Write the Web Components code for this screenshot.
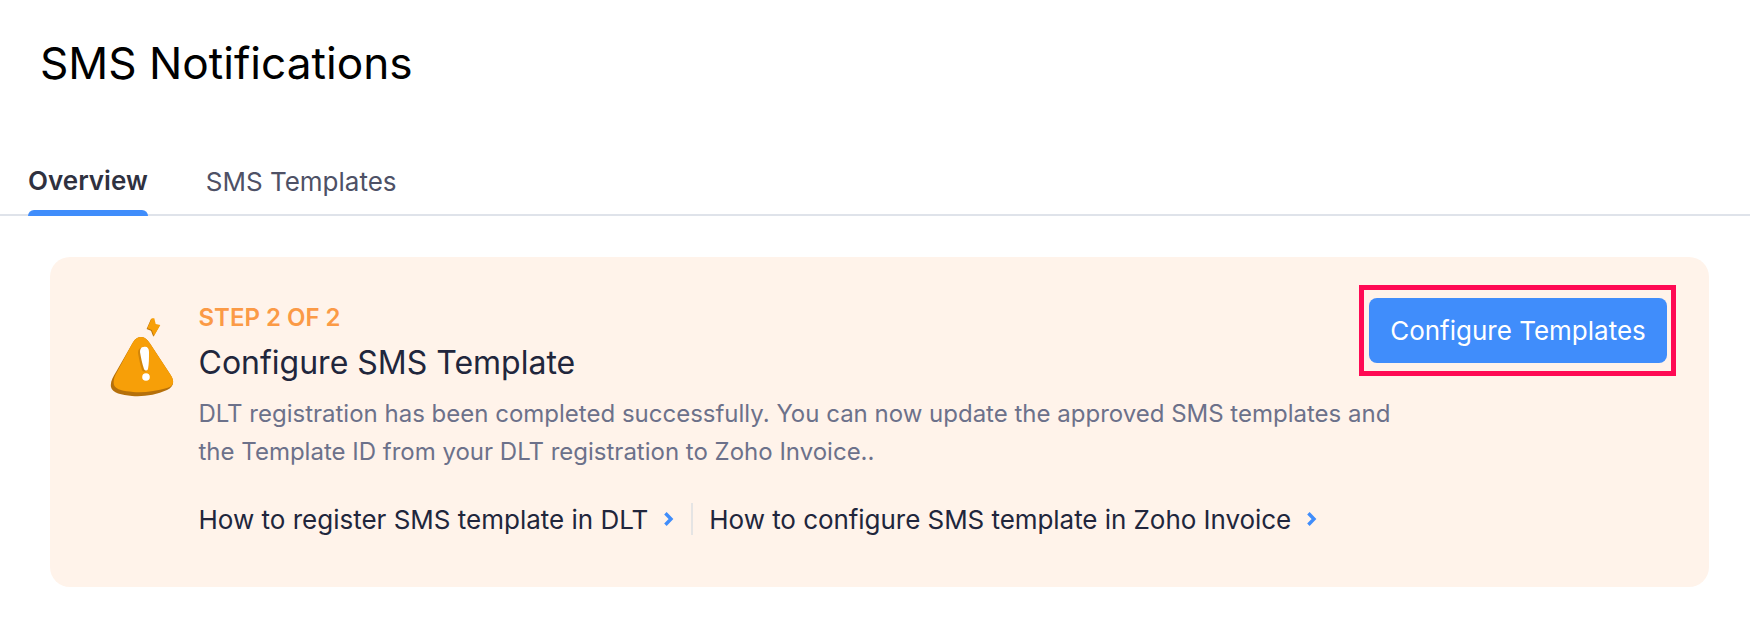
<!DOCTYPE html>
<html>
<head>
<meta charset="utf-8">
<style>
  html, body { margin: 0; background: #fff; }
  body { font-family: Inter, sans-serif; width: 1750px; height: 636px; overflow: hidden; }
</style>
</head>
<body>
<sms-page></sms-page>
<script>
class SmsTabs extends HTMLElement {
  constructor() {
    super();
    this.attachShadow({ mode: 'open' });
    this.shadowRoot.innerHTML = `
      <style>
        :host { display: flex; gap: 58px; padding: 0 0 0 28px; height: 62px; border-bottom: 2px solid #dfe3ea; box-sizing: border-box; font-size: 26px; }
        .tab { position: relative; color: #4e5166; line-height: 56px; height: 62px; box-sizing: border-box; }
        .tab.active { color: #2f3140; font-weight: 600; line-height: 53px; }
        .tab.active::after { content: ''; position: absolute; left: 0; right: 0; bottom: 0; height: 6px; background: #408dfb; border-radius: 6px 6px 0 0; }
      </style>
      <div class="tab active">Overview</div>
      <div class="tab">SMS Templates</div>
    `;
  }
}

class StepCard extends HTMLElement {
  constructor() {
    super();
    this.attachShadow({ mode: 'open' });
    this.shadowRoot.innerHTML = `
      <style>
        :host { display: flex; margin: 41px 41px 0 50px; height: 330px; box-sizing: border-box; background: #fff3ea; border-radius: 20px; padding: 48px 33px 0 60px; }
        .icon { width: 64px; height: 82px; margin: 11px 24.5px 0 0; flex: none; }
        .body { flex: 1; min-width: 0; }
        .step { color: #fb9a46; font-size: 24px; font-weight: 600; line-height: 26px; }
        h2 { margin: 12px 0 0; font-size: 32px; font-weight: 400; color: #21263c; line-height: 40px; }
        p { margin: 12px 0 0; font-size: 24px; color: #6c718a; line-height: 38px; width: 1200px; }
        .links { display: flex; align-items: center; margin-top: 32px; font-size: 26px; color: #21263c; white-space: nowrap; }
        .links svg { width: 11px; height: 16px; margin-left: 15px; flex: none; }
        .links .second { letter-spacing: -0.05px; }
        .sep { width: 2px; height: 32px; background: #e5e4e4; margin: 0 16px 0 17px; }
        .action { flex: none; align-self: flex-start; margin-top: -20px; border: 5px solid #ff0a54; padding: 8px 4px 8px 5px; }
        button { display: block; width: 298px; height: 65px; padding: 0; background: #408dfb; color: #fff; border: 0; border-radius: 8px; font: 400 26px Inter, sans-serif; }
      </style>
      <svg class="icon" viewBox="0 0 64 82">
        <path d="M41 3L43.6 3L45 8.7L49.6 9.7L43.3 20.7L41 14.7L36.6 13z" fill="#b5700b"/>
        <path d="M41.7 2.3L44.3 2.3L45.7 8L50.3 9L44 20L41.7 14L37.3 12.3z" fill="#f79f08"/>
        <path d="M31 21C35 21 38 24 41 29L60 58C65 65 64 71 57 74C46 79 33 81 22 80C12 79 2 77 1 71C0 66 3 61 6 56L22 28C25 23 27 21 31 21z" fill="#b5700b"/>
        <path d="M31 21C35 21 38 24 41 29L60 58C65 65 64 70 57 72C46 75 34 77 23 76C14 75 6 74 4 69C3 65 4 61 7 56L22 28C25 23 27 21 31 21z" fill="#f79f08"/>
        <path d="M33 31C37 30 39 32 39 36C39 42 39 48 38 53C37 55 34 55 33 53C31 47 30 42 29 36C29 33 30 31 33 31z" fill="#b5700b" opacity=".55" transform="translate(-1 1)"/>
        <path d="M33.5 31C37 30 39 32 39 36C39 42 39 48 38 53C37 55 35 55 34 53C32 47 31 42 30 36C30 33 31 31 33.5 31z" fill="#fff"/>
        <circle cx="36" cy="61" r="3.8" fill="#fff"/>
      </svg>
      <div class="body">
        <div class="step">STEP 2 OF 2</div>
        <h2>Configure SMS Template</h2>
        <p>DLT registration has been completed successfully. You can now update the approved SMS templates and the Template ID from your DLT registration to Zoho Invoice..</p>
        <div class="links">
          <span>How to register SMS template in DLT</span>
          <svg viewBox="0 0 11 16"><path d="M2.4 2.2L8 8l-5.6 5.8" fill="none" stroke="#408dfb" stroke-width="3.4"/></svg>
          <div class="sep"></div>
          <span class="second">How to configure SMS template in Zoho Invoice</span>
          <svg viewBox="0 0 11 16"><path d="M2.4 2.2L8 8l-5.6 5.8" fill="none" stroke="#408dfb" stroke-width="3.4"/></svg>
        </div>
      </div>
      <div class="action"><button>Configure Templates</button></div>
    `;
  }
}

class SmsPage extends HTMLElement {
  constructor() {
    super();
    this.attachShadow({ mode: 'open' });
    this.shadowRoot.innerHTML = `
      <style>
        :host { display: block; }
        h1 { margin: 0; padding: 36px 0 0 40px; height: 154px; box-sizing: border-box; font-size: 44.2px; font-weight: 400; line-height: 54px; color: #000; }
      </style>
      <h1>SMS Notifications</h1>
      <sms-tabs></sms-tabs>
      <step-card></step-card>
    `;
  }
}

customElements.define('sms-tabs', SmsTabs);
customElements.define('step-card', StepCard);
customElements.define('sms-page', SmsPage);
</script>
</body>
</html>
